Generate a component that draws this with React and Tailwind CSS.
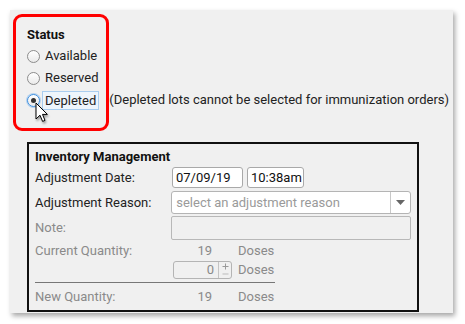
const Radio = ({ checked }) => (
  <span
    className={`relative flex h-[13px] w-[13px] shrink-0 items-center justify-center rounded-full border bg-gradient-to-b from-white to-[#eaeaea] ${
      checked ? 'border-[#3c8fe0] shadow-[0_0_0_1px_rgba(120,180,240,0.5)]' : 'border-[#8c8c8c]'
    }`}
  >
    {checked && <span className="h-[5px] w-[5px] rounded-full bg-[#333]" />}
  </span>
);

const Cursor = () => (
  <svg
    className="absolute left-[25px] top-[92px] drop-shadow-[1px_2px_1px_rgba(0,0,0,0.35)]"
    width="14"
    height="22"
    viewBox="0 0 14 22"
  >
    <path
      d="M1 1 L1 17 L5 13.2 L7.6 19.4 L10 18.4 L7.5 12.4 L12.4 12.4 Z"
      fill="#fff"
      stroke="#000"
      strokeWidth="1"
      strokeLinejoin="round"
    />
  </svg>
);

// tiny up/down buttons of the quantity spinner
const SpinButtons = () => (
  <span className="flex h-full w-[13px] items-center justify-center border-l border-[#c4c4c4]">
    <svg width="7" height="14" viewBox="0 0 7 14">
      <path d="M0.5 3.5 H6.5 M3.5 0.5 V6.5" stroke="#999" strokeWidth="1" />
      <path d="M0.5 11 H6.5" stroke="#bbb" strokeWidth="1" />
    </svg>
  </span>
);

export default function App() {
  return (
    <div
      className="min-h-screen bg-white pl-[10px] pt-[10px]"
      style={{ fontFamily: 'Roboto, "Liberation Sans", sans-serif' }}
    >
      <div className="relative h-[303px] w-[443px] bg-[#f0f0f0] pl-[17px] pt-[17px] text-[13px] text-[#222] shadow-[2px_3px_5px_rgba(0,0,0,0.35)]">
        {/* status choices */}
        <div className="font-bold leading-[16px] text-[#111]">Status</div>
        <div className="mt-[2px] leading-[16px]">
          <div className="flex h-[22px] items-center">
            <Radio />
            <span className="ml-[5px]">Available</span>
          </div>
          <div className="flex h-[22px] items-center">
            <Radio />
            <span className="ml-[5px]">Reserved</span>
          </div>
          <div className="flex h-[22px] items-center">
            <Radio checked />
            <span className="ml-[2px] border border-[#a9cdef] bg-[#eef5fc] px-[2px] leading-[17px]">
              Depleted
            </span>
            <span className="ml-[10px] whitespace-nowrap">
              (Depleted lots cannot be selected for immunization orders)
            </span>
          </div>
        </div>

        {/* highlight + pointer */}
        <div className="pointer-events-none absolute left-[3px] top-[4px] h-[117px] w-[96px] rounded-[9px] border-[3px] border-[#ff0000]" />
        <Cursor />

        {/* inventory management */}
        <div className="mt-[31px] h-[170px] w-[392px] border-2 border-[#111] px-[6px] pt-[5px] leading-[16px]">
          <div className="font-bold text-[#111]">Inventory Management</div>

          <div className="mt-[2px] flex h-[21px] items-center">
            <span className="w-[137px]">Adjustment Date:</span>
            <div className="flex h-full w-[71px] items-center rounded-[3px] border border-[#a9a9a9] bg-white pl-[3px] text-[#111]">
              07/09/19
            </div>
            <div className="ml-[4px] flex h-full w-[57px] items-center rounded-[3px] border border-[#a9a9a9] bg-white pl-[3px] text-[#111]">
              10:38am
            </div>
          </div>

          <div className="mt-[3px] flex h-[23px] items-center">
            <span className="w-[137px]">Adjustment Reason:</span>
            <div className="flex h-full w-[241px] items-center rounded-[3px] border border-[#b4b4b4] bg-white">
              <span className="flex-1 pl-[4px] text-[#9a9a9a]">select an adjustment reason</span>
              <span className="flex h-full w-[20px] items-center justify-center border-l border-[#c8c8c8]">
                <svg width="9" height="5" viewBox="0 0 9 5">
                  <path d="M0 0 L9 0 L4.5 5 Z" fill="#666" />
                </svg>
              </span>
            </div>
          </div>

          <div className="mt-[2px] flex h-[24px] items-center">
            <span className="w-[137px] text-[#8a8a8a]">Note:</span>
            <div className="h-full w-[241px] rounded-[2px] border border-[#b8b8b8] bg-[#f0f0f0]" />
          </div>

          <div className="mt-[3px] flex h-[16px] items-center text-[#8a8a8a]">
            <span className="w-[137px]">Current Quantity:</span>
            <span className="w-[40px] text-right">19</span>
            <span className="ml-[26px]">Doses</span>
          </div>

          <div className="mt-[2px] flex h-[18px] items-center text-[#8a8a8a]">
            <span className="w-[138px]" />
            <div className="flex h-full w-[59px] items-center rounded-[3px] border border-[#b4b4b4] bg-[#f0f0f0]">
              <span className="flex-1 pr-[4px] text-right">0</span>
              <SpinButtons />
            </div>
            <span className="ml-[6px]">Doses</span>
          </div>

          <div className="mt-[3px] w-[240px] border-t border-[#777]" />

          <div className="mt-[6px] flex h-[16px] items-center text-[#8a8a8a]">
            <span className="w-[137px]">New Quantity:</span>
            <span className="w-[40px] text-right">19</span>
            <span className="ml-[26px]">Doses</span>
          </div>
        </div>
      </div>
    </div>
  );
}
